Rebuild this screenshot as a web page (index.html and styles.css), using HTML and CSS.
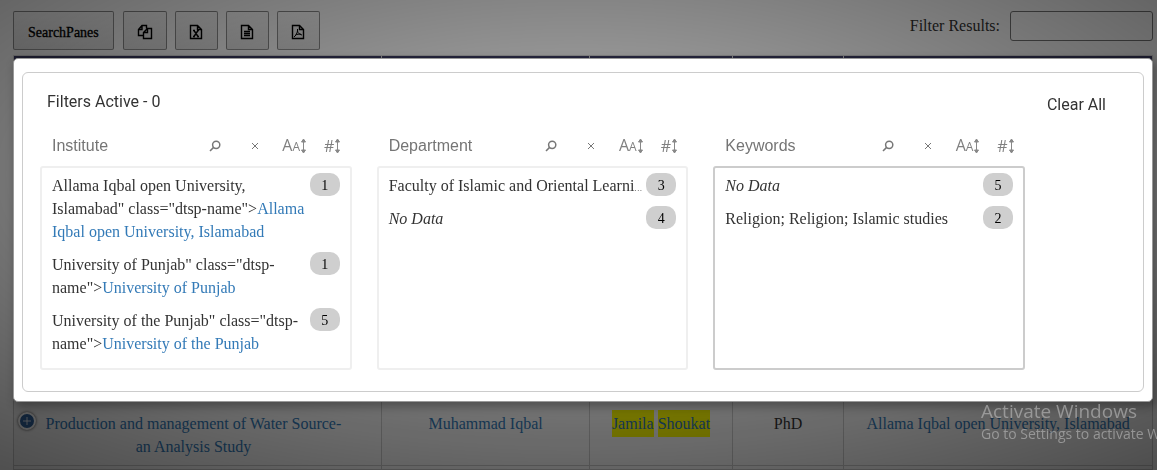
FILE: index.html
```html
<!DOCTYPE html>
<html lang="en">
<head>
<meta charset="utf-8">
<title>Filter Results</title>
<link rel="stylesheet" href="styles.css">
</head>
<body>
<svg class="sprite" aria-hidden="true">
  <symbol id="search" viewBox="0 0 12 12"><circle cx="7.2" cy="4.8" r="3.6"/><path d="M4.6 7.4 1 11"/></symbol>
  <symbol id="cross" viewBox="0 0 8 8"><path d="m1 1 6 6M7 1 1 7"/></symbol>
  <symbol id="updown" viewBox="0 0 7 16"><path d="M3.5 2v12M1.500 4l2-3 2 3zM1.500 12l2 3 2-3z"/></symbol>
</svg>
<main class="page">
  <header class="toolbar">
    <div class="buttons">
      <button class="btn btn-text">SearchPanes</button>
      <button class="btn btn-copy" aria-label="Copy"><svg class="file-icon" viewBox="0 0 16 16"><path d="M6 11.500H1.500V5.500L5 1.500h4.500v3M1.500 5.500H5v-4M6.500 14.500v-6L10.500 4.500h4v10zM6.500 8.500h4v-4"/></svg></button>
      <button class="btn" aria-label="Excel"><svg class="file-icon" viewBox="0 0 16 16"><path d="M2.500 1.500h7l4 4v9h-11zM9.500 1.500v4h4M5 6.500h2M9 6.500h2M5 12.500h2M9 12.500h2M6 6.500l4 6M10 6.500l-4 6"/></svg></button>
      <button class="btn" aria-label="CSV"><svg class="file-icon" viewBox="0 0 16 16"><path d="M2.500 1.500h7l4 4v9h-11zM9.500 1.500v4h4M5 7.500h6M5 9.500h6M5 11.500h6"/></svg></button>
      <button class="btn" aria-label="PDF"><svg class="file-icon" viewBox="0 0 16 16"><path d="M2.500 1.500h7l4 4v9h-11zM9.500 1.500v4h4"/><path class="thin" d="M7.500 5v2c.3 2 2 3.500 4.500 4M7.500 7C7 9.500 5.500 12 4 13M5.500 11c1.500-.8 3.500-1 5.500-.8"/></svg></button>
    </div>
    <label class="filter">Filter Results: <input type="search"></label>
  </header>
  <table class="results">
    <colgroup><col class="c-title"><col class="c-author"><col class="c-guide"><col class="c-degree"><col class="c-place"></colgroup>
    <thead><tr><th></th><th></th><th></th><th></th><th></th></tr></thead>
    <tbody>
      <tr>
        <td class="expandable"><button class="expand" aria-label="Show details"><svg viewBox="0 0 10 10"><path d="M5 0v10M0 5h10"/></svg></button><a href="#">Production and management of Water Source- an Analysis Study</a></td>
        <td><a href="#">Muhammad Iqbal</a></td>
        <td><a href="#"><mark>Jamila</mark> <mark>Shoukat</mark></a></td>
        <td>PhD</td>
        <td><a href="#">Allama Iqbal open University, Islamabad</a></td>
      </tr>
      <tr class="next"><td></td><td></td><td></td><td></td><td></td></tr>
    </tbody>
  </table>
</main>
<div class="shade"></div>
<section class="popover" role="dialog" aria-label="Search panes">
  <div class="panes">
    <div class="title-row"><span class="active">Filters Active - 0</span><button class="clear">Clear All</button></div>
    <div class="pane-grid">
      <section class="pane">
        <div class="pane-head"><input class="pane-name" type="text" placeholder="Institute" aria-label="Institute">
          <button class="tool" aria-label="Search"><svg class="i-search"><use href="#search"/></svg></button><button class="tool" aria-label="Clear"><svg class="i-cross"><use href="#cross"/></svg></button><button class="tool" aria-label="Sort by name"><span>A<small>A</small></span><svg class="i-sort"><use href="#updown"/></svg></button><button class="tool" aria-label="Sort by count"><span>#</span><svg class="i-sort"><use href="#updown"/></svg></button></div>
        <ul class="list">
          <li><span class="name">Allama Iqbal open University, Islamabad" class="dtsp-name"&gt;<a href="#">Allama Iqbal open University, Islamabad</a></span><span class="count">1</span></li>
          <li><span class="name">University of Punjab" class="dtsp-name"&gt;<a href="#">University of Punjab</a></span><span class="count">1</span></li>
          <li><span class="name">University of the Punjab" class="dtsp-name"&gt;<a href="#">University of the Punjab</a></span><span class="count">5</span></li>
        </ul>
      </section>
      <section class="pane">
        <div class="pane-head"><input class="pane-name" type="text" placeholder="Department" aria-label="Department">
          <button class="tool" aria-label="Search"><svg class="i-search"><use href="#search"/></svg></button><button class="tool" aria-label="Clear"><svg class="i-cross"><use href="#cross"/></svg></button><button class="tool" aria-label="Sort by name"><span>A<small>A</small></span><svg class="i-sort"><use href="#updown"/></svg></button><button class="tool" aria-label="Sort by count"><span>#</span><svg class="i-sort"><use href="#updown"/></svg></button></div>
        <ul class="list">
          <li><span class="name clip">Faculty of Islamic and Oriental Learni<span class="dots">…</span></span><span class="count">3</span></li>
          <li><span class="name"><em>No Data</em></span><span class="count">4</span></li>
        </ul>
      </section>
      <section class="pane">
        <div class="pane-head"><input class="pane-name" type="text" placeholder="Keywords" aria-label="Keywords">
          <button class="tool" aria-label="Search"><svg class="i-search"><use href="#search"/></svg></button><button class="tool" aria-label="Clear"><svg class="i-cross"><use href="#cross"/></svg></button><button class="tool" aria-label="Sort by name"><span>A<small>A</small></span><svg class="i-sort"><use href="#updown"/></svg></button><button class="tool" aria-label="Sort by count"><span>#</span><svg class="i-sort"><use href="#updown"/></svg></button></div>
        <ul class="list focused">
          <li><span class="name"><em>No Data</em></span><span class="count">5</span></li>
          <li><span class="name">Religion; Religion; Islamic studies</span><span class="count">2</span></li>
        </ul>
      </section>
    </div>
  </div>
</section>
<aside class="watermark"><div class="wm-title">Activate Windows</div><div class="wm-text">Go to Settings to activate Windows.</div></aside>
</body>
</html>
```

FILE: styles.css
```css
* { box-sizing: border-box; }
html { overflow: hidden; }
body {
  margin: 0;
  height: 100vh;
  overflow: hidden;
  background: #fff;
  color: #333;
  font: 16px/23px "Liberation Serif", "Times New Roman", serif;
}
a { color: #337ab7; text-decoration: none; }
button, input { font: inherit; color: inherit; margin: 0; }
button { padding: 0; border: 0; background: none; cursor: pointer; }
.sprite { position: absolute; width: 0; height: 0; }

.page { padding: 11px 4px 0 13px; }
.toolbar { display: flex; justify-content: space-between; align-items: flex-start; height: 44px; }
.buttons { display: flex; gap: 8px; }
.btn {
  display: flex;
  align-items: center;
  justify-content: center;
  width: 43px;
  height: 39px;
  padding-top: 3px;
  border: 1px solid rgba(0, 0, 0, .4);
  border-radius: 2px;
  background: linear-gradient(to bottom, rgba(230, 230, 230, .1), rgba(0, 0, 0, .1));
  color: #000;
}
.btn-text { width: auto; padding: 4px 14px 0; font-size: 14px; margin-right: 1px; -webkit-text-stroke: .3px #000; }
.btn-copy { width: 44px; }
.file-icon { width: 16px; height: 16px; fill: none; stroke: #000; stroke-width: 1.4; }
.file-icon .thin { stroke-width: 1; }
.filter { display: flex; align-items: flex-start; gap: 10px; line-height: 29px; }
.filter input { width: 143px; height: 30px; border: 1px solid #777; border-radius: 3px; background: transparent; }

.results { width: 100%; table-layout: fixed; border-collapse: collapse; text-align: center; }
.c-title { width: 32.3%; }
.c-author { width: 18.3%; }
.c-guide { width: 12.5%; }
.c-degree { width: 9.8%; }
.results th { height: 345px; background: #404068; border: 1px solid #ddd; }
.results td { height: 64px; padding: 11px 8px 7px; vertical-align: top; background: #f9f9f9; border: 1px solid #ccc; color: #333; }
.results .expandable { position: relative; padding-left: 26px; padding-right: 34px; }
.results .next td { height: 4px; padding: 0; }
.results mark { display: inline-block; height: 27px; line-height: 27px; margin-top: -2px; background: #ff0; color: inherit; }
.expand {
  position: absolute;
  left: 4px;
  top: 11px;
  display: flex;
  align-items: center;
  justify-content: center;
  width: 18px;
  height: 18px;
  border: 2px solid #fff;
  border-radius: 50%;
  background: #31639c;
  box-shadow: 0 0 3px #444;
}
.expand svg { width: 8px; height: 8px; stroke: #fff; flex: none; }

.shade {
  position: fixed;
  inset: 0;
  background: radial-gradient(82% 84% at 50% 37%, rgba(0, 0, 0, .3), rgba(0, 0, 0, .7));
}
.popover {
  position: absolute;
  top: 58px;
  left: 13px;
  right: 4px;
  padding: 13px 8px 9px;
  background: #fff;
  border: 1px solid #999;
  border-radius: 5px;
  box-shadow: 3px 4px 10px 1px rgba(0, 0, 0, .3);
}
.panes { padding: 0 118px 21px 17px; border: 1px solid #ccc; border-radius: 6px; }
.title-row {
  display: flex;
  justify-content: space-between;
  margin-right: -81px;
  padding: 17px 0 0 7px;
  font: 16px/24px Roboto, sans-serif;
}
.clear { margin-top: 3px; }
.pane-grid { display: grid; grid-template-columns: repeat(3, minmax(0, 1fr)); gap: 25px; padding-top: 14px; }
.pane-head { display: flex; align-items: center; height: 32px; margin-bottom: 3px; padding: 0 1px 2px 12px; }
.pane-name { flex: 1; min-width: 0; padding: 0; border: 0; outline: 0; background: none; font: 16px/24px "Liberation Sans", Arial, sans-serif; }
.pane-name::placeholder { color: #757575; opacity: 1; }
.tool {
  display: flex;
  align-items: center;
  justify-content: center;
  width: 40px;
  height: 24px;
  color: #808080;
  font: 16px/20px "Open Sans", sans-serif;
}
.pane-head .tool:last-child { width: 36px; }
.tool small { font-size: 12px; }
.tool svg { fill: none; stroke: #777; flex: none; }
.i-search { width: 12px; height: 12px; stroke-width: 1.5; }
.i-cross { width: 8px; height: 8px; }
.tool .i-sort { width: 7px; height: 16px; fill: #888; stroke: #888; }
.list { height: 204px; margin: 0; padding: 1px 10px; overflow: hidden; border: 2px solid #efefef; border-radius: 3px; list-style: none; }
.focused { border-color: #ccc; }
.list li { display: flex; justify-content: space-between; gap: 4px; padding: 5px 0; }
.name { min-width: 0; }
.clip { overflow: hidden; white-space: nowrap; }
.dots { font-size: 8px; line-height: 8px; }
.count { flex: none; width: 30px; height: 23px; margin-top: -1px; border-radius: 10px; background: #cfcfcf; color: #000; font-size: 14px; line-height: 25px; text-align: center; }

.watermark { position: fixed; left: 981px; right: 0; top: 399px; overflow: hidden; white-space: nowrap; color: rgba(190, 190, 190, .6); font-family: "Open Sans", sans-serif; pointer-events: none; }
.wm-title { font-size: 19px; line-height: 25px; }
.wm-text { font-size: 14px; line-height: 20px; }
```
